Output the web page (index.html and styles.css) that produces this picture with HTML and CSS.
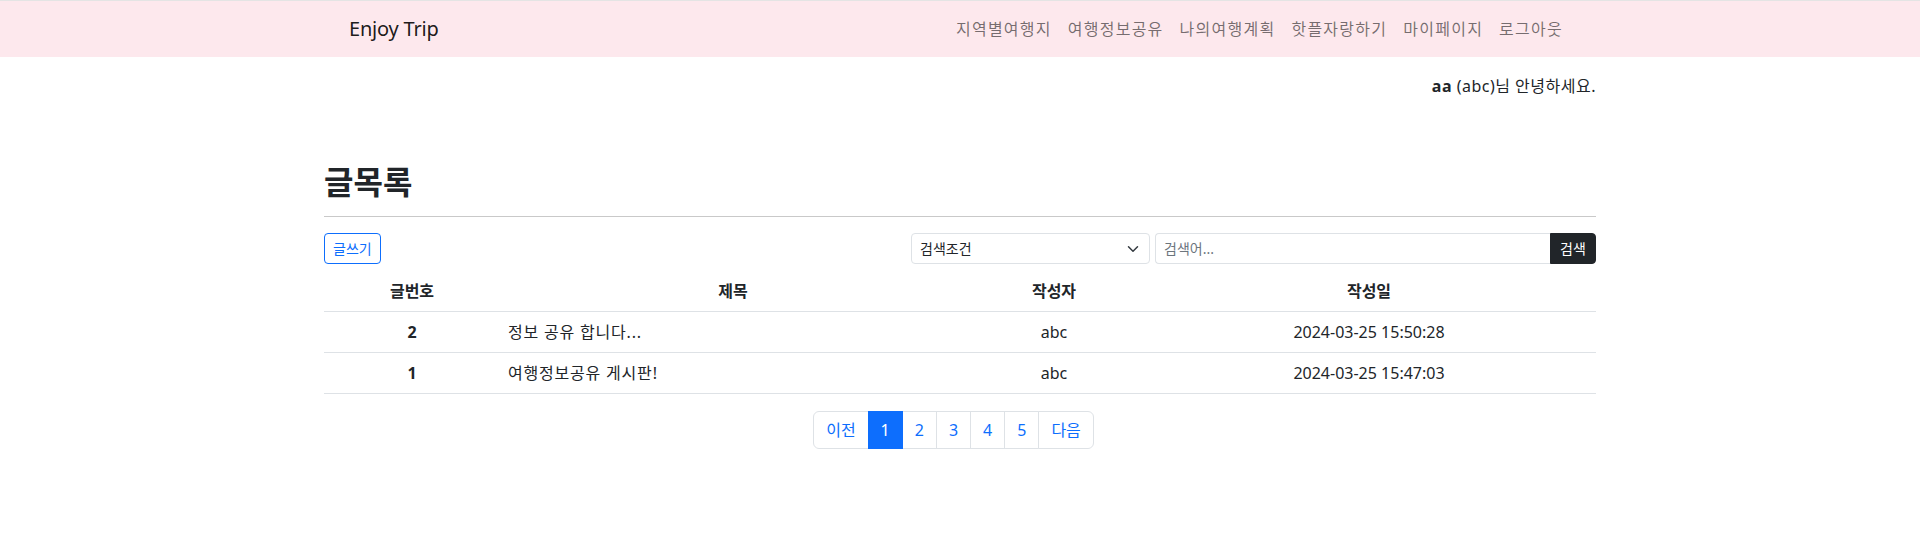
FILE: index.html
```html
<!DOCTYPE html>
<html lang="ko">
<head>
<meta charset="utf-8">
<title>Enjoy Trip</title>
<link rel="stylesheet" href="styles.css">
</head>
<body>
<nav class="navbar">
  <div class="navbar-inner">
    <a class="brand" href="#">Enjoy Trip</a>
    <ul class="nav-links">
      <li><a href="#">지역별여행지</a></li>
      <li><a href="#">여행정보공유</a></li>
      <li><a href="#">나의여행계획</a></li>
      <li><a href="#">핫플자랑하기</a></li>
      <li><a href="#">마이페이지</a></li>
      <li><a href="#">로그아웃</a></li>
    </ul>
  </div>
</nav>
<main class="page">
  <p class="greeting"><strong>aa</strong> (abc)님 안녕하세요.</p>
  <h2 class="title">글목록</h2>
  <hr class="divider">
  <div class="toolbar">
    <button class="btn-write" type="button">글쓰기</button>
    <form class="search">
      <div class="select">
        <span>검색조건</span>
        <svg width="16" height="12" viewBox="0 0 16 16"><path d="m2 5 6 6 6-6" fill="none" stroke="#343a40" stroke-linecap="round" stroke-linejoin="round" stroke-width="2"/></svg>
      </div>
      <div class="input-group">
        <input class="search-input" type="text" placeholder="검색어...">
        <button class="btn-search" type="button">검색</button>
      </div>
    </form>
  </div>
  <table class="board">
    <colgroup>
      <col class="c-no"><col class="c-title"><col class="c-writer"><col class="c-date">
    </colgroup>
    <thead>
      <tr><th>글번호</th><th>제목</th><th>작성자</th><th>작성일</th></tr>
    </thead>
    <tbody>
      <tr><th>2</th><td class="subject">정보 공유 합니다...</td><td>abc</td><td>2024-03-25 15:50:28</td></tr>
      <tr><th>1</th><td class="subject">여행정보공유 게시판!</td><td>abc</td><td>2024-03-25 15:47:03</td></tr>
    </tbody>
  </table>
  <div class="pager-wrap">
    <ul class="pagination">
      <li><a href="#">이전</a></li>
      <li class="active"><a href="#">1</a></li>
      <li><a href="#">2</a></li>
      <li><a href="#">3</a></li>
      <li><a href="#">4</a></li>
      <li><a href="#">5</a></li>
      <li><a href="#">다음</a></li>
    </ul>
  </div>
</main>
</body>
</html>
```
FILE: styles.css
```css
* { box-sizing: border-box; }
html, body { margin: 0; padding: 0; }
body {
  font-family: "Noto Sans", "Noto Sans CJK KR", sans-serif;
  font-size: 16px;
  line-height: 1.5;
  color: #212529;
  background: #fff;
}
a { text-decoration: none; }

.navbar {
  border-top: 1px solid #e4e4e4;
  background: #fde8ed;
  height: 57px;
}
.navbar-inner {
  width: 1222px;
  margin: 0 auto;
  height: 56px;
  display: flex;
  align-items: center;
  justify-content: space-between;
}
.brand {
  font-size: 20px;
  line-height: 30px;
  color: rgba(0,0,0,.9);
  letter-spacing: -0.2px;
}
.nav-links {
  list-style: none;
  margin: 0;
  padding: 0;
  display: flex;
}
.nav-links a {
  display: block;
  padding: 8px;
  line-height: 24px;
  letter-spacing: 1.25px;
  color: rgba(0,0,0,.55);
}

.page {
  width: 1272px;
  margin: 0 auto;
}
.greeting {
  margin: 17px 0 0;
  text-align: right;
  line-height: 24px;
  letter-spacing: 0.5px;
}
.greeting strong { font-weight: 700; }
.title {
  margin: 65px 0 0;
  font-size: 32px;
  line-height: 38px;
  font-weight: 700;
}
.divider {
  margin: 15px 0 0;
  border: 0;
  border-top: 1px solid #c9c9c9;
  height: 0;
}
.toolbar {
  margin-top: 16px;
  display: flex;
  justify-content: space-between;
  align-items: center;
  height: 31px;
}
.btn-write {
  font: inherit;
  font-size: 14px;
  line-height: 21px;
  padding: 4px 8px;
  color: #0d6efd;
  background: #fff;
  border: 1px solid #0d6efd;
  border-radius: 4px;
  height: 31px;
}
.search {
  display: flex;
  gap: 5px;
  margin: 0;
}
.select {
  width: 239px;
  height: 31px;
  border: 1px solid #dee2e6;
  border-radius: 4px;
  padding: 0 8px;
  display: flex;
  align-items: center;
  justify-content: space-between;
  font-size: 14px;
  color: #212529;
}
.input-group {
  display: flex;
  width: 441px;
}
.search-input {
  flex: 1;
  height: 31px;
  font: inherit;
  font-size: 14px;
  padding: 4px 8px;
  border: 1px solid #dee2e6;
  border-right: 0;
  border-radius: 4px 0 0 4px;
  outline: none;
}
.search-input::placeholder { color: #6c757d; }
.btn-search {
  width: 46px;
  height: 31px;
  font: inherit;
  font-size: 14px;
  color: #fff;
  background: #212529;
  border: 1px solid #212529;
  border-radius: 0 4px 4px 0;
  padding: 0;
}

.board {
  margin-top: 7px;
  width: 100%;
  border-collapse: collapse;
  table-layout: fixed;
}
.c-no { width: 176px; }
.c-title { width: 466px; }
.c-writer { width: 176px; }
.c-date { width: 454px; }
.board th, .board td {
  padding: 8px;
  line-height: 24px;
  text-align: center;
  border-bottom: 1px solid #dee2e6;
}
.board th { font-weight: 700; }
.board td { font-weight: 400; }
.board td.subject { text-align: left; letter-spacing: 0.8px; }

.pager-wrap {
  margin-top: 17px;
  display: flex;
  justify-content: center;
  padding-right: 13px;
}
.pagination {
  list-style: none;
  margin: 0;
  padding: 0;
  display: flex;
}
.pagination li a {
  display: block;
  padding: 6px 12px;
  line-height: 24px;
  color: #0d6efd;
  background: #fff;
  border: 1px solid #dee2e6;
  margin-left: -1px;
}
.pagination li:first-child a {
  margin-left: 0;
  border-radius: 6px 0 0 6px;
}
.pagination li:last-child a { border-radius: 0 6px 6px 0; }
.pagination li.active a {
  background: #0d6efd;
  border-color: #0d6efd;
  color: #fff;
  position: relative;
  z-index: 1;
}
```
